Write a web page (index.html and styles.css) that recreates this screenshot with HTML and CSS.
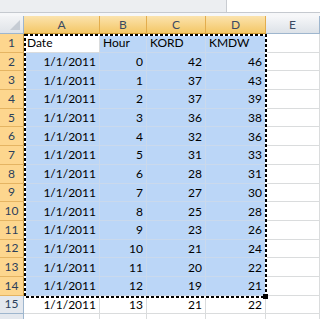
FILE: index.html
```html
<!DOCTYPE html>
<html>
<head>
<meta charset="utf-8">
<link rel="stylesheet" href="styles.css">
</head>
<body>
<div class="app">
  <div class="topbar">
    <div class="fx-left"></div>
    <div class="fx-right"></div>
  </div>
  <div class="strip"></div>
  <div class="sheet">
    <div class="corner"><span class="tri"></span></div>
    <div class="ch sel">A</div><div class="ch sel">B</div><div class="ch sel">C</div><div class="ch sel">D</div><div class="ch">E</div>

    <div class="rh sel">1</div><div class="c active">Date</div><div class="c s">Hour</div><div class="c s">KORD</div><div class="c s">KMDW</div><div class="c"></div>
    <div class="rh sel">2</div><div class="c s n">1/1/2011</div><div class="c s n">0</div><div class="c s n">42</div><div class="c s n">46</div><div class="c"></div>
    <div class="rh sel">3</div><div class="c s n">1/1/2011</div><div class="c s n">1</div><div class="c s n">37</div><div class="c s n">43</div><div class="c"></div>
    <div class="rh sel">4</div><div class="c s n">1/1/2011</div><div class="c s n">2</div><div class="c s n">37</div><div class="c s n">39</div><div class="c"></div>
    <div class="rh sel">5</div><div class="c s n">1/1/2011</div><div class="c s n">3</div><div class="c s n">36</div><div class="c s n">38</div><div class="c"></div>
    <div class="rh sel">6</div><div class="c s n">1/1/2011</div><div class="c s n">4</div><div class="c s n">32</div><div class="c s n">36</div><div class="c"></div>
    <div class="rh sel">7</div><div class="c s n">1/1/2011</div><div class="c s n">5</div><div class="c s n">31</div><div class="c s n">33</div><div class="c"></div>
    <div class="rh sel">8</div><div class="c s n">1/1/2011</div><div class="c s n">6</div><div class="c s n">28</div><div class="c s n">31</div><div class="c"></div>
    <div class="rh sel">9</div><div class="c s n">1/1/2011</div><div class="c s n">7</div><div class="c s n">27</div><div class="c s n">30</div><div class="c"></div>
    <div class="rh sel">10</div><div class="c s n">1/1/2011</div><div class="c s n">8</div><div class="c s n">25</div><div class="c s n">28</div><div class="c"></div>
    <div class="rh sel">11</div><div class="c s n">1/1/2011</div><div class="c s n">9</div><div class="c s n">23</div><div class="c s n">26</div><div class="c"></div>
    <div class="rh sel">12</div><div class="c s n">1/1/2011</div><div class="c s n">10</div><div class="c s n">21</div><div class="c s n">24</div><div class="c"></div>
    <div class="rh sel">13</div><div class="c s n">1/1/2011</div><div class="c s n">11</div><div class="c s n">20</div><div class="c s n">22</div><div class="c"></div>
    <div class="rh sel">14</div><div class="c s n">1/1/2011</div><div class="c s n">12</div><div class="c s n">19</div><div class="c s n">21</div><div class="c"></div>
    <div class="rh">15</div><div class="c n">1/1/2011</div><div class="c n">13</div><div class="c n">21</div><div class="c n">22</div><div class="c"></div>
    <div class="rh">16</div><div class="c n">1/1/2011</div><div class="c n">14</div><div class="c n">21</div><div class="c n">22</div><div class="c"></div>
  </div>
  <svg class="marquee" width="320" height="319" viewBox="0 0 320 319">
    <rect x="25" y="35" width="241" height="262" fill="none" stroke="#fff" stroke-width="2"/>
    <rect x="25" y="35" width="241" height="262" fill="none" stroke="#000" stroke-width="2" stroke-dasharray="3 2"/>
    <rect x="263" y="294" width="5" height="5" fill="#000"/>
  </svg>
</div>
</body>
</html>
```

FILE: styles.css
```css
html, body {
  margin: 0;
  padding: 0;
  background: #fff;
  overflow: hidden;
}

.app {
  position: relative;
  width: 320px;
  height: 319px;
  overflow: hidden;
  font-family: Lato, "Liberation Sans", sans-serif;
  font-size: 12px;
  color: #000;
}

.topbar {
  display: flex;
  height: 12px;
  border-bottom: 1px solid #c5c9cf;
}

.fx-left {
  width: 226px;
  background: #eceef1;
  border-right: 1px solid #c9ccd1;
}

.fx-right {
  flex: 1;
  background: #fff;
}

.strip {
  height: 3px;
  background: #f6f7f9;
}

.sheet {
  display: grid;
  grid-template-columns: 24px 76px 47px 59px 60px 54px;
  grid-template-rows: 18px;
  grid-auto-rows: 18.7px;
}

.corner {
  position: relative;
  background: linear-gradient(#f3f4f6, #dfe3e8);
  border-right: 1px solid #9eb6ce;
  border-bottom: 1px solid #9eb6ce;
}

.tri {
  position: absolute;
  right: 3px;
  bottom: 3px;
  width: 0;
  height: 0;
  border-left: 10px solid transparent;
  border-bottom: 10px solid #c6ccd4;
}

.ch {
  display: flex;
  align-items: center;
  justify-content: center;
  color: #3b4a62;
  font-size: 12px;
  background: linear-gradient(#f6f7f9, #dde2e8);
  border-right: 1px solid #9eb6ce;
  border-bottom: 1px solid #9eb6ce;
  line-height: 1;
}

.ch.sel {
  background: linear-gradient(#fbe3ae, #f4c766);
  border-right-color: #e3ad4d;
  border-bottom-color: #c9962f;
}

.rh {
  display: flex;
  align-items: center;
  justify-content: center;
  color: #2b3f5c;
  font-size: 12px;
  background: #e4e8ee;
  border-right: 1px solid #9eb6ce;
  border-bottom: 1px solid #9eb6ce;
  line-height: 1;
}

.rh.sel {
  background: #fdd68e;
  border-right-color: #c99a40;
  border-bottom-color: #e5b462;
}

.c {
  display: flex;
  align-items: center;
  padding: 1px 3px 0;
  background: #fff;
  border-right: 1px solid #dadcdd;
  border-bottom: 1px solid #dadcdd;
  white-space: nowrap;
  overflow: hidden;
  line-height: 1;
}

.c.s {
  background: #bbd6f7;
  border-right-color: #cad9ec;
  border-bottom-color: #cad9ec;
}

.c.n {
  justify-content: flex-end;
}

.marquee {
  position: absolute;
  left: 0;
  top: 0;
  pointer-events: none;
}
```
